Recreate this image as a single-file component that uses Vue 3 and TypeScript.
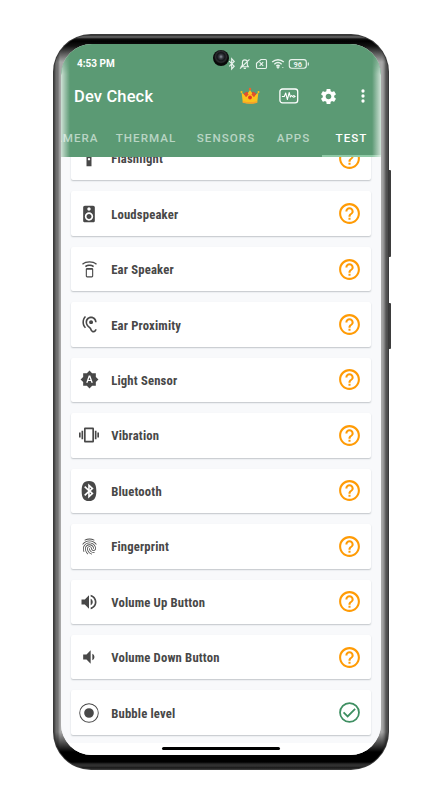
<script setup lang="ts">
type TestStatus = 'pending' | 'passed'

interface TestItem {
  label: string
  icon: string
  size: number
  status: TestStatus
}

const tabs: string[] = ['CAMERA', 'THERMAL', 'SENSORS', 'APPS', 'TEST']
const activeTab = 'TEST'

const icons: Record<string, string> = {
  flashlight: 'M6 2h12v3H6zM6 6h12v2l-3 3v11H9V11L6 8zM12 12a1.4 1.4 0 1 0 0 2.8 1.4 1.4 0 0 0 0-2.8z',
  speaker: 'M17 2H7c-1.1 0-2 .9-2 2v16c0 1.1.9 1.99 2 1.99L17 22c1.1 0 2-.9 2-2V4c0-1.1-.9-2-2-2zm-5 2c1.1 0 2 .9 2 2s-.9 2-2 2c-1.11 0-2-.9-2-2s.89-2 2-2zm0 16c-2.76 0-5-2.24-5-5s2.24-5 5-5 5 2.24 5 5-2.24 5-5 5zm0-8c-1.66 0-3 1.34-3 3s1.34 3 3 3 3-1.34 3-3-1.34-3-3-3z',
  earSpeaker: 'M9 10h6c1 0 1.7.7 1.7 1.7v8.6c0 1-.7 1.7-1.7 1.7H9c-1 0-1.7-.7-1.7-1.7v-8.6C7.3 10.7 8 10 9 10zm-.3 2.2v8.2h6.6v-8.2zM2.600 4.600C7.400.4 16.600.4 21.400 4.600l-1.100 1.300c-4.300-3.600-12.300-3.600-16.600 0zM6.300 7.700c3.200-2.500 8.200-2.500 11.400 0l-1.100 1.300c-2.500-1.900-6.700-1.900-9.200 0z',
  hearing: 'M17 20c-.29 0-.56-.06-.76-.15-.71-.37-1.21-.88-1.71-2.38-.51-1.56-1.47-2.29-2.39-3-.79-.61-1.61-1.24-2.32-2.53C9.29 10.98 9 9.93 9 9c0-2.8 2.2-5 5-5s5 2.2 5 5h2c0-3.93-3.07-7-7-7S7 5.07 7 9c0 1.26.38 2.65 1.07 3.9.91 1.65 1.98 2.48 2.85 3.15.81.62 1.39 1.07 1.71 2.05.6 1.82 1.37 2.84 2.73 3.55.51.23 1.07.35 1.64.35 2.21 0 4-1.79 4-4h-2c0 1.1-.9 2-2 2zM7.64 2.64L6.22 1.22C4.23 3.21 3 5.96 3 9s1.23 5.79 3.22 7.78l1.41-1.41C6.01 13.74 5 11.49 5 9s1.01-4.74 2.64-6.36zM11.5 9c0 1.38 1.12 2.5 2.5 2.5s2.5-1.12 2.5-2.5-1.12-2.5-2.5-2.5-2.5 1.12-2.5 2.5z',
  light: 'M10.85 12.65h2.3L12 9l-1.15 3.65zM20 8.69V4h-4.69L12 .69 8.69 4H4v4.69L.69 12 4 15.31V20h4.69L12 23.31 15.31 20H20v-4.69L23.31 12 20 8.69zM14.3 16l-.7-2h-3.2l-.7 2H7.8L11 7h2l3.2 9h-1.9z',
  vibration: 'M0 15h2V9H0v6zm3 2h2V7H3v10zm19-8v6h2V9h-2zm-3 8h2V7h-2v10zM16.5 3h-9C6.67 3 6 3.67 6 4.5v15c0 .83.67 1.5 1.5 1.5h9c.83 0 1.5-.67 1.5-1.5v-15c0-.83-.67-1.5-1.5-1.5zM16 19H8V5h8v14z',
  bluetooth: 'M12 1C5.5 1 4 5.5 4 12s1.500 11 8 11 8-4.500 8-11S18.500 1 12 1zM11.100 3.800L17 9.300 14.100 12 17 14.700l-5.900 5.500v-5.700l-3.200 3L6.700 16.200 11.100 12 6.700 7.800l1.200-1.300 3.200 3zM12.800 7.800v2.800l1.600-1.400zM12.800 13.400v2.800l1.600-1.400z',
  fingerprint: 'M17.81 4.47c-.08 0-.16-.02-.23-.06C15.66 3.42 14 3 12.01 3c-1.98 0-3.86.47-5.57 1.41-.24.13-.54.04-.68-.2-.13-.24-.04-.55.2-.68C7.82 2.52 9.86 2 12.01 2c2.13 0 3.99.47 6.03 1.52.25.13.34.43.21.67-.09.18-.26.28-.44.28zM3.5 9.72c-.1 0-.2-.03-.29-.09-.23-.16-.28-.47-.12-.7.99-1.4 2.25-2.5 3.75-3.27C9.98 4.04 14 4.03 17.15 5.65c1.5.77 2.76 1.86 3.75 3.25.16.22.11.54-.12.7-.23.16-.54.11-.7-.12-.9-1.26-2.04-2.25-3.39-2.94-2.87-1.47-6.54-1.47-9.4.01-1.36.7-2.5 1.7-3.4 2.96-.08.14-.23.21-.39.21zm6.25 12.07c-.13 0-.26-.05-.35-.15-.87-.87-1.34-1.43-2.01-2.64-.69-1.23-1.05-2.73-1.05-4.34 0-2.97 2.54-5.39 5.66-5.39s5.66 2.42 5.66 5.39c0 .28-.22.5-.5.5s-.5-.22-.5-.5c0-2.42-2.09-4.39-4.66-4.39-2.57 0-4.66 1.97-4.66 4.39 0 1.44.32 2.77.93 3.85.64 1.15 1.08 1.64 1.85 2.42.19.2.19.51 0 .71-.11.1-.24.15-.37.15zm7.17-1.85c-1.19 0-2.24-.3-3.1-.89-1.49-1.01-2.38-2.65-2.38-4.39 0-.28.22-.5.5-.5s.5.22.5.5c0 1.41.72 2.74 1.94 3.56.71.48 1.54.71 2.54.71.24 0 .64-.03 1.04-.1.27-.05.53.13.58.41.05.27-.13.53-.41.58-.57.11-1.07.12-1.21.12zM14.91 22c-.04 0-.09-.01-.13-.02-1.59-.44-2.63-1.03-3.72-2.1-1.4-1.39-2.17-3.24-2.17-5.22 0-1.62 1.38-2.94 3.08-2.94 1.7 0 3.08 1.32 3.08 2.94 0 1.07.93 1.94 2.08 1.94s2.08-.87 2.08-1.94c0-3.77-3.25-6.83-7.25-6.83-2.84 0-5.44 1.58-6.61 4.03-.39.81-.59 1.76-.59 2.8 0 .78.07 2.01.67 3.61.1.26-.03.55-.29.64-.26.1-.55-.04-.64-.29-.49-1.31-.73-2.61-.73-3.96 0-1.2.23-2.29.68-3.24 1.33-2.79 4.28-4.6 7.51-4.6 4.55 0 8.25 3.51 8.25 7.83 0 1.62-1.38 2.94-3.08 2.94s-3.08-1.32-3.08-2.94c0-1.07-.93-1.94-2.08-1.94s-2.08.87-2.08 1.94c0 1.71.66 3.31 1.87 4.51.95.94 1.86 1.46 3.27 1.85.27.07.42.35.35.61-.05.23-.26.38-.47.38z',
  volumeUp: 'M3 9v6h4l5 5V4L7 9H3zm13.5 3c0-1.77-1.02-3.29-2.5-4.03v8.05c1.48-.73 2.5-2.25 2.5-4.02zM14 3.23v2.06c2.89.86 5 3.54 5 6.71s-2.11 5.85-5 6.71v2.06c4.01-.91 7-4.49 7-8.77s-2.99-7.86-7-8.77z',
  volumeDown: 'M18.5 12c0-1.77-1.02-3.29-2.5-4.03v8.05c1.48-.73 2.5-2.25 2.5-4.02zM5 9v6h4l5 5V4L9 9H5z',
  bubble: 'M12 .3a11.7 11.7 0 1 0 0 23.4A11.7 11.7 0 0 0 12 .3zm0 1.1a10.6 10.6 0 1 1 0 21.2 10.6 10.6 0 0 1 0-21.2zM12 6.2a5.8 5.8 0 1 0 0 11.6 5.8 5.8 0 0 0 0-11.6z',
}

const items: TestItem[] = [
  { label: 'Flashlight', icon: 'flashlight', size: 20, status: 'pending' },
  { label: 'Loudspeaker', icon: 'speaker', size: 20, status: 'pending' },
  { label: 'Ear Speaker', icon: 'earSpeaker', size: 19, status: 'pending' },
  { label: 'Ear Proximity', icon: 'hearing', size: 19, status: 'pending' },
  { label: 'Light Sensor', icon: 'light', size: 19, status: 'pending' },
  { label: 'Vibration', icon: 'vibration', size: 20, status: 'pending' },
  { label: 'Bluetooth', icon: 'bluetooth', size: 22, status: 'pending' },
  { label: 'Fingerprint', icon: 'fingerprint', size: 19, status: 'pending' },
  { label: 'Volume Up Button', icon: 'volumeUp', size: 20, status: 'pending' },
  { label: 'Volume Down Button', icon: 'volumeDown', size: 20, status: 'pending' },
  { label: 'Bubble level', icon: 'bubble', size: 20, status: 'passed' },
]
</script>

<template>
  <main class="stage">
    <div class="phone">
      <span class="side-key volume"></span>
      <span class="side-key power"></span>
      <div class="screen">
        <header class="app-header">
          <div class="status-bar">
            <span class="clock">4:53 PM</span>
            <svg class="status-icons" width="84" height="14" viewBox="0 0 84 14" fill="none" stroke="currentColor" stroke-width="1.15">
              <path d="M2.2 4.200l5 5L4.700 12V1.800l2.500 2.600-5 5" />
              <path d="M14.300 9.700h7l-1-1.600V5.700c0-3.800-4.900-3.800-4.900 0v2.400zM16.700 11.300h2.200M13 11.700l9.500-9.400" />
              <path d="M34 2.500h4.300c.8 0 1.200.4 1.200 1.200v6.600c0 .8-.4 1.200-1.200 1.200h-7.600c-.8 0-1.200-.4-1.200-1.200V6.200z" />
              <path d="M32.600 5.200l3.600 3.600m0-3.600l-3.600 3.600" />
              <path d="M45.200 5.100c3.300-3.100 8.300-3.100 11.600 0M47.300 7.200c2.200-2 5.200-2 7.400 0M49.300 9.200c1-1 2.400-1 3.400 0" stroke-width="1.4" />
              <path d="M51 9.200l1.200 1L51 11.600l-1.200-1.400zM55 10.500h1.500" fill="currentColor" stroke-width=".6" />
              <rect x="62.300" y="2.600" width="17" height="8.600" rx="2.400" />
              <path d="M81.300 5.400v3" />
              <text x="70.800" y="9.600" text-anchor="middle">96</text>
            </svg>
          </div>

          <div class="toolbar">
            <h1 class="title">Dev Check</h1>
            <svg class="crown" width="20" height="18" viewBox="0 0 20 18">
              <path d="M4 6.500l3-1.800L10 7l3-2.300 3 1.800-1.500 6h-9z" fill="#d9472b" />
              <path d="M1.600 5.500L5.800 9 10 3l4.200 6 4.200-3.500-1.200 10c-4.600 1.300-9.800 1.300-14.400 0z" fill="#fcc21b" />
              <path d="M4 7l2.600-2 2 2.400L6 10.200zM16 7l-2.600-2-2 2.400 2.600 2.800z" fill="#e2502d" />
              <path d="M2.700 14.200c5 1.200 9.600 1.200 14.600 0v1.600c-4.500 1.300-10.100 1.300-14.600 0z" fill="#f7a329" />
              <circle cx="10" cy="10.500" r="1.900" fill="#e23b24" />
              <circle cx="1.500" cy="5" r="1" fill="#fcc21b" />
              <circle cx="18.500" cy="5" r="1" fill="#fcc21b" />
              <circle cx="10" cy="1.900" r="1.200" fill="#f0622a" />
            </svg>
            <svg class="monitor" width="20" height="16" viewBox="0 0 20 16" fill="none" stroke="#fff" stroke-linejoin="round" stroke-linecap="round">
              <rect x=".9" y="1" width="17.800" height="13.800" rx="2.600" stroke-width="1.300" />
              <path d="M3.300 8.500h2L6.700 5l1.700 6.500 1.800-7 1.200 4.500 1.200-1.500 1.200 1.200" stroke-width="1.050" />
              <circle cx="14.900" cy="8.400" r="1" stroke-width="1" />
            </svg>
            <svg class="gear" width="19" height="19" viewBox="0 0 24 24" fill="#fff">
              <path d="M19.140 12.940c.04-.3.060-.61.060-.94 0-.32-.02-.64-.07-.94l2.030-1.580c.18-.14.23-.41.12-.61l-1.920-3.320c-.12-.22-.37-.29-.59-.22l-2.390.96c-.5-.38-1.030-.7-1.620-.94l-.36-2.540c-.04-.24-.24-.41-.48-.41h-3.840c-.24 0-.43.17-.47.41l-.36 2.540c-.59.24-1.130.57-1.620.94l-2.390-.96c-.22-.08-.47 0-.59.22L2.740 8.870c-.12.21-.08.47.12.61l2.030 1.580c-.05.3-.09.63-.09.94s.02.64.07.94l-2.030 1.580c-.18.14-.23.41-.12.61l1.920 3.320c.12.22.37.29.59.22l2.390-.96c.5.38 1.030.7 1.620.94l.36 2.540c.05.24.24.41.48.41h3.840c.24 0 .44-.17.47-.41l.36-2.540c.59-.24 1.130-.56 1.620-.94l2.390.96c.22.08.47 0 .59-.22l1.920-3.320c.12-.22.070-.47-.12-.61l-2.010-1.580zM12 15.600c-1.980 0-3.600-1.620-3.600-3.600s1.620-3.600 3.600-3.600 3.600 1.620 3.600 3.600-1.620 3.600-3.600 3.600z" />
            </svg>
            <svg class="more" width="4" height="14" viewBox="0 0 4 14" fill="#fff">
              <circle cx="2" cy="2" r="1.650" />
              <circle cx="2" cy="7" r="1.650" />
              <circle cx="2" cy="12" r="1.650" />
            </svg>
          </div>

          <nav class="tabs">
            <span v-for="tab in tabs" :key="tab" class="tab" :class="{ active: tab === activeTab }">{{ tab }}</span>
          </nav>
        </header>

        <section class="list">
          <article v-for="item in items" :key="item.label" class="card">
            <span class="icon-slot">
              <svg :width="item.size" :height="item.size" viewBox="0 0 24 24" fill="currentColor" fill-rule="evenodd">
                <path :d="icons[item.icon]" />
              </svg>
            </span>
            <span class="label">{{ item.label }}</span>
            <svg v-if="item.status === 'pending'" class="state" width="25" height="25" viewBox="0 0 24 24" fill="#ff9b05">
              <path d="M11 18h2v-2h-2v2zm1-16C6.480 2 2 6.480 2 12s4.480 10 10 10 10-4.480 10-10S17.520 2 12 2zm0 18c-4.410 0-8-3.590-8-8s3.590-8 8-8 8 3.590 8 8-3.590 8-8 8zm0-14c-2.210 0-4 1.790-4 4h2c0-1.100.9-2 2-2s2 .9 2 2c0 2-3 1.750-3 5h2c0-2.250 3-2.500 3-5 0-2.210-1.790-4-4-4z" />
            </svg>
            <svg v-else class="state" width="25" height="25" viewBox="0 0 24 24" fill="none" stroke="#3f8f62" stroke-width="1.700">
              <circle cx="12" cy="12" r="9.100" />
              <path d="M6.300 11.900l3.900 3.900 7.200-7.300" />
            </svg>
          </article>
        </section>

        <footer class="nav-bar"><span class="home-pill"></span></footer>
        <span class="camera"></span>
      </div>
    </div>
  </main>
</template>

<style>
body {
  margin: 0;
  background: #fff;
}
</style>

<style scoped>
.stage {
  box-sizing: border-box;
  width: 442px;
  height: 800px;
  padding: 34px 53px 30px;
  overflow: hidden;
  background: #fff;
  font-family: Roboto, 'Liberation Sans', sans-serif;
}

.phone {
  position: relative;
  box-sizing: border-box;
  width: 336px;
  height: 736px;
  padding: 10px 8px 15px;
  border-radius: 38px;
  background:
    linear-gradient(180deg, #4a4a4a 0, #2a2a2a 1px, #6b6b6b 3px, #111 5px, #000 7px, rgba(0, 0, 0, 0.9) 12px, transparent 28px),
    linear-gradient(0deg, #555 0, #161616 2px, #333 4px, #2b2b2b 6px, #000 8px, #000 18px, transparent 38px),
    linear-gradient(90deg, #333 0, #3c3c3c 1px, #6c6c6c 3px, #747474 5px, #a8a8a8 7px, #a8a8a8 9px, #b4b4b4 20px, #b4b4b4 316px, #a8a8a8 327px, #a8a8a8 329px, #8c8c8c 331px, #555 333px, #4a4a4a 335px, #222 336px);
  box-shadow: inset 0 0 0 1px #3a3a3a;
}

.side-key {
  position: absolute;
  left: 336px;
  width: 2px;
  border-radius: 0 1px 1px 0;
  background: #3d3d3d;
}

.volume {
  top: 136px;
  height: 87px;
}

.power {
  top: 269px;
  height: 46px;
}

.screen {
  position: relative;
  display: flex;
  flex-direction: column;
  width: 320px;
  height: 711px;
  overflow: hidden;
  border-radius: 31px;
  background: #f8f9fb;
}

.app-header {
  position: relative;
  flex: none;
  box-sizing: border-box;
  height: 113px;
  padding-top: 12px;
  background: #5b9a74;
  color: #fff;
}

.app-header::after {
  content: '';
  position: absolute;
  inset: 0;
  border-radius: 31px 31px 0 0;
  background: linear-gradient(90deg, rgba(255, 255, 255, 0.7), rgba(255, 255, 255, 0) 9px, rgba(255, 255, 255, 0) 311px, rgba(255, 255, 255, 0.7));
  -webkit-mask-image: linear-gradient(transparent 5px, #000 30px);
  mask-image: linear-gradient(transparent 5px, #000 30px);
}

.status-bar {
  display: flex;
  align-items: center;
  height: 16px;
  padding-left: 16px;
}

.clock {
  width: 150px;
  font-size: 10px;
  font-weight: 700;
  line-height: 16px;
}

.status-icons {
  flex: none;
  color: #e9f3ed;
}

.status-icons text {
  fill: currentColor;
  stroke: none;
  font: 700 7.5px Roboto, sans-serif;
}

.toolbar {
  display: flex;
  align-items: center;
  height: 40px;
  margin-top: 4px;
  padding-left: 13px;
}

.title {
  width: 166px;
  margin: 0;
  padding-top: 1px;
  font-size: 16.5px;
  font-weight: 500;
  line-height: 20px;
  letter-spacing: 0.15px;
}

.monitor {
  margin-left: 19px;
}

.gear {
  margin-left: 20px;
}

.more {
  margin-left: 23px;
}

.tabs {
  display: grid;
  grid-template-columns: 66px 82px 78px 57px 59px;
  height: 37px;
  margin: 4px 0 0 -22px;
}

.tab {
  box-sizing: border-box;
  padding-top: 10px;
  text-align: center;
  font-size: 11.6px;
  font-weight: 500;
  line-height: 17px;
  letter-spacing: 1.05px;
  white-space: nowrap;
  color: #b9d5c4;
}

.tab.active {
  border-bottom: 2px solid #8fc9a6;
  color: #fff;
}

.list {
  flex: 1;
  display: flex;
  flex-direction: column;
  gap: 11px;
  min-height: 0;
  padding: 0 10px;
  overflow: hidden;
  background: #f8f9fb;
}

.card {
  flex: none;
  display: flex;
  align-items: center;
  box-sizing: border-box;
  height: 44.45px;
  padding: 0 9px 0 6px;
  border-radius: 2px;
  background: #fff;
  box-shadow: 0 1px 1.5px rgba(40, 50, 60, 0.26);
}

.card:first-child {
  margin-top: -21px;
}

.icon-slot {
  display: flex;
  justify-content: center;
  width: 24.4px;
  color: #484848;
}

.label {
  flex: 1;
  margin-left: 9.8px;
  padding-top: 2px;
  font-size: 12.7px;
  font-weight: 700;
  font-stretch: 75%;
  line-height: 18px;
  letter-spacing: 0.17px;
  color: #484848;
}

.state {
  flex: none;
}

.nav-bar {
  flex: none;
  display: flex;
  justify-content: center;
  height: 12px;
  background: #fff;
}

.home-pill {
  width: 118px;
  height: 3px;
  margin-top: 4px;
  border-radius: 2px;
  background: #000;
}

.camera {
  position: absolute;
  top: 6px;
  left: 152px;
  width: 16px;
  height: 16px;
  border-radius: 50%;
  background: radial-gradient(circle at 50% 42%, #8c929c 0, #3a3d44 2px, #15161a 4px, #2b2c2f 5.5px, #080808 7px);
}
</style>
